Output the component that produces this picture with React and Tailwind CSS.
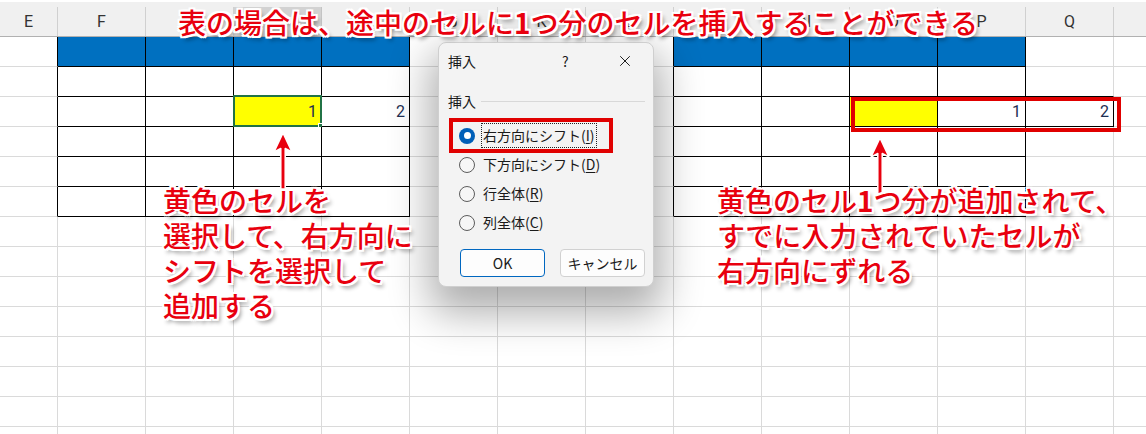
import React from 'react';
import { X } from 'lucide-react';

const COLS = ['E', 'F', 'G', 'H', 'I', 'J', 'K', 'L', 'M', 'N', 'O', 'P', 'Q', ''];
const ROWS = 14;

// cells that belong to one of the two bordered tables
const inTable = (c, r) =>
  (c >= 1 && c <= 4 && r >= 0 && r <= 5) ||
  (c >= 8 && c <= 11 && r >= 0 && r <= 5) ||
  (c === 12 && r === 2);

const isBlue = (c, r) => r === 0 && ((c >= 1 && c <= 4) || (c >= 8 && c <= 11));
const values = { '3-2': '1', '4-2': '2', '11-2': '1', '12-2': '2' };
const yellow = { '3-2': true, '10-2': true };

const callout =
  "text-[#e8000e] font-medium [font-family:'Noto_Sans_CJK_JP','Noto_Sans',sans-serif] [text-shadow:2px_0_0_#fff,-2px_0_0_#fff,0_2px_0_#fff,0_-2px_0_#fff,2px_2px_0_#fff,-2px_-2px_0_#fff,2px_-2px_0_#fff,-2px_2px_0_#fff,3px_4px_4px_rgba(0,0,0,0.45)]";

const Arrow = ({ className }) => (
  <svg className={className} width="20" height="58" viewBox="0 0 20 58">
    <path
      d="M10 1 L19 20 L12.2 16.5 L12.2 57 L7.8 57 L7.8 16.5 L1 20 Z"
      fill="#e8000e"
      stroke="#fff"
      strokeWidth="1.5"
      strokeLinejoin="round"
    />
  </svg>
);

const Radio = ({ checked }) =>
  checked ? (
    <span className="w-[16px] h-[16px] rounded-full bg-[#005fb8] flex items-center justify-center shrink-0">
      <span className="w-[7px] h-[7px] rounded-full bg-white" />
    </span>
  ) : (
    <span className="w-[16px] h-[16px] rounded-full border border-[#5c5c5c] bg-[#f6f6f6] shrink-0" />
  );

const options = [
  { label: '右方向にシフト', key: 'I', checked: true },
  { label: '下方向にシフト', key: 'D' },
  { label: '行全体', key: 'R' },
  { label: '列全体', key: 'C' },
];

const InsertDialog = () => (
  <div className="absolute left-[438px] top-[42px] w-[216px] h-[245px] rounded-[8px] bg-[#f3f3f3] border border-[#cfcfcf] shadow-[0_18px_42px_8px_rgba(0,0,0,0.32)] text-[14px] text-[#1a1a1a] [font-family:'Noto_Sans_CJK_JP','Noto_Sans',sans-serif]">
    <div className="relative h-[36px] flex items-center pl-[9px]">
      <span>挿入</span>
      <span className="absolute left-[123px]">?</span>
      <X size={18} strokeWidth={1.3} className="absolute left-[177px] top-[9px] text-[#1a1a1a]" />
    </div>
    <div className="mt-[12px] h-[20px] flex items-center pl-[9px] pr-[8px]">
      <span>挿入</span>
      <div className="flex-1 h-px bg-[#d8d8d8] ml-[5px]" />
    </div>
    <div className="mt-[10px] flex flex-col">
      {options.map((o) => (
        <div key={o.key} className="h-[29px] flex items-center pl-[20px] gap-[6px]">
          <Radio checked={o.checked} />
          <span className={o.checked ? 'border border-dotted border-[#222] px-[1px] py-[1px] leading-[21px]' : 'px-[2px] leading-[21px]'}>
            {o.label}(<span className="underline underline-offset-2">{o.key}</span>)
          </span>
        </div>
      ))}
    </div>
    <div className="mt-[12px] flex pl-[21px] gap-[15px]">
      <button className="w-[85px] h-[28px] rounded-[4px] bg-[#fdfdfd] border border-[#0067c0] flex items-center justify-center">OK</button>
      <button className="w-[85px] h-[28px] rounded-[4px] bg-[#fdfdfd] border border-[#d1d1d1] flex items-center justify-center">キャンセル</button>
    </div>
    <div className="absolute left-[10px] top-[75px] w-[164px] h-[35px] border-4 border-[#e00000]" />
  </div>
);

export default function App() {
  return (
    <div className="relative w-[1146px] h-[434px] overflow-hidden bg-white">
      {/* column headers */}
      <div className="h-[37px] pt-[2px]">
        <div className="h-[35px] flex bg-[#f0f0f0] border-b border-[#b1b1b1]">
          {COLS.map((c, i) => (
            <div key={i} className={(i === 0 ? 'w-[58px]' : 'w-[88px]') + ' shrink-0 h-full flex items-end'}>
              <div
                className={
                  'w-full h-[29px] border-r flex items-center justify-center text-[16px] [font-family:Roboto,sans-serif] ' +
                  (i === 3 ? 'bg-[#d2d2d2] border-[#c4c4c4] text-[#14532d]' : 'border-[#d0d0d0] text-[#333]')
                }
              >
                {c}
              </div>
            </div>
          ))}
        </div>
      </div>

      {/* cells */}
      <div className="flex flex-col">
        {Array.from({ length: ROWS }).map((_, r) => (
          <div key={r} className="flex">
            {COLS.map((col, c) => {
              const k = `${c}-${r}`;
              const rightBlack = inTable(c, r) || inTable(c + 1, r);
              const bottomBlack = inTable(c, r) || inTable(c, r + 1);
              return (
                <div
                  key={c}
                  className={
                    (c === 0 ? 'w-[58px] ' : 'w-[88px] ') +
                    'relative shrink-0 h-[30px] border-r border-b flex items-center justify-end pr-[4px] text-[16px] text-[#1e2f52] [font-family:Roboto,sans-serif] ' +
                    (rightBlack ? 'border-r-black ' : 'border-r-[#dadada] ') +
                    (bottomBlack ? 'border-b-black ' : 'border-b-[#dadada] ') +
                    (isBlue(c, r) ? 'bg-[#0070c0]' : yellow[k] ? 'bg-[#ffff00]' : 'bg-white')
                  }
                >
                  {values[k]}
                  {k === '3-2' && (
                    <>
                      <div className="absolute -left-[1px] -top-[2px] -right-[1px] -bottom-[1px] border-2 border-[#217346]" />
                      <div className="absolute -right-[4px] -bottom-[4px] w-[7px] h-[7px] bg-[#217346] border border-white" />
                    </>
                  )}
                  {k === '10-2' && (
                    <div className="absolute left-[1px] top-0 w-[270px] h-[35px] border-4 border-[#e00000] z-10" />
                  )}
                </div>
              );
            })}
          </div>
        ))}
      </div>

      <Arrow className="absolute left-[273px] top-[132px]" />
      <Arrow className="absolute left-[870px] top-[137px]" />

      <InsertDialog />

      <div className={'absolute left-[178px] top-[8px] text-[28px] leading-[28px] whitespace-nowrap ' + callout}>
        表の場合は、途中のセルに<span className="font-bold">1</span>つ分のセルを挿入することができる
      </div>

      <div className={'absolute left-[163px] top-[183px] text-[28px] leading-[35px] whitespace-nowrap ' + callout}>
        <div>黄色のセルを</div>
        <div>選択して、右方向に</div>
        <div>シフトを選択して</div>
        <div>追加する</div>
      </div>

      <div className={'absolute left-[717px] top-[183px] text-[28px] leading-[35px] whitespace-nowrap ' + callout}>
        <div>
          黄色のセル<span className="font-bold">1</span>つ分が追加されて、
        </div>
        <div>すでに入力されていたセルが</div>
        <div>右方向にずれる</div>
      </div>
    </div>
  );
}
